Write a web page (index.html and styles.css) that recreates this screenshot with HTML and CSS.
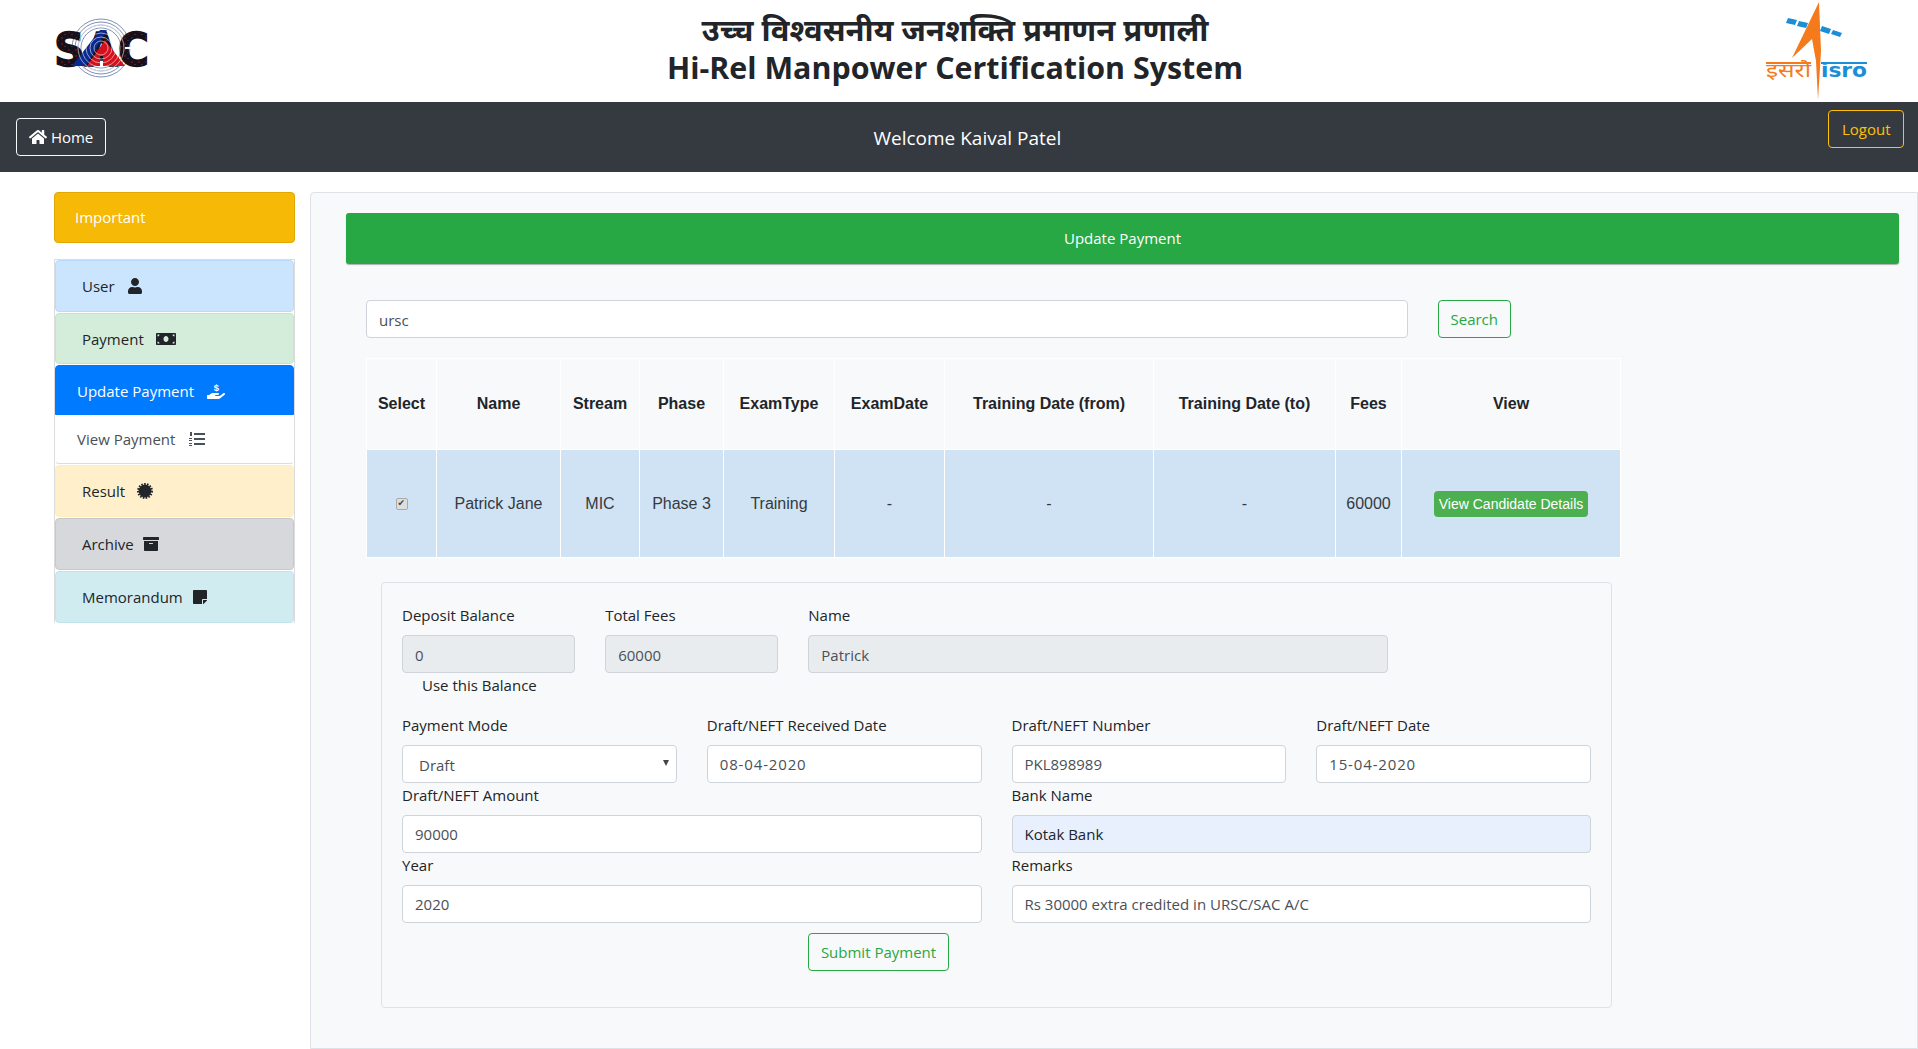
FILE: index.html
```html
<!DOCTYPE html>
<html>
<head>
    <title>Update Payment</title>
    <link rel="stylesheet" href="styles.css">
</head>
<body>
    <header class="top-header">
        <svg class="logo-sac" viewBox="0 0 100 62" aria-label="SAC logo">
            <defs>
                <pattern id="speckle" width="7" height="6" patternUnits="userSpaceOnUse">
                    <rect width="7" height="6" fill="#17101a"/>
                    <circle cx="2" cy="2" r="0.8" fill="#b3121d"/>
                    <circle cx="5" cy="4.5" r="0.5" fill="#5a6a70"/>
                </pattern>
            </defs>
            <g fill="none" stroke="#7f8fb5" stroke-width="1">
                <circle cx="48" cy="30" r="29"/>
                <circle cx="48" cy="30" r="26"/>
                <circle cx="48" cy="30" r="23"/>
                <circle cx="48" cy="30" r="20"/>
            </g>
            <text class="logo-sac-text" x="1" y="48" textLength="95" lengthAdjust="spacingAndGlyphs">SAC</text>
            <path d="M19 48 L47 12 L54 12 L33 48 Z" fill="#0b2a8f"/>
            <path d="M34 48 L52 22 L72 48 L50 48 L50 38 L47 38 L47 48 Z" fill="#d3101c"/>
            <g fill="none" stroke="#fff" stroke-width="0.8" opacity="0.7">
                <circle cx="48" cy="30" r="23"/>
                <circle cx="48" cy="30" r="19"/>
                <circle cx="48" cy="30" r="15"/>
                <circle cx="48" cy="30" r="11"/>
                <circle cx="48" cy="30" r="7"/>
            </g>
            <rect x="72" y="29" width="26" height="2" fill="#fff"/>
        </svg>
        <div class="site-title">
            <div class="title-hi">उच्च विश्वसनीय जनशक्ति प्रमाणन प्रणाली</div>
            <div class="title-en">Hi-Rel Manpower Certification System</div>
        </div>
        <svg class="logo-isro" viewBox="0 0 104 100" aria-label="ISRO logo">
            <path d="M53 1 L26 57 L46 38 L50 60 L52 99 L55 50 Z" fill="#f47a1c"/>
            <g fill="#1b8ed6">
                <path d="M22 17 L31 19 L29 24 L20 22 Z"/>
                <path d="M33 20 L42 22 L40 27 L31 25 Z"/>
                <path d="M56 25 L65 28 L63 33 L54 30 Z"/>
                <path d="M67 29 L76 32 L74 36 L65 33 Z"/>
            </g>
            <text class="logo-isro-hi" x="0" y="76" textLength="45" lengthAdjust="spacingAndGlyphs">इसरो</text>
            <rect x="0" y="61" width="45" height="2" fill="#f47a1c"/>
            <text class="logo-isro-en" x="55" y="76" textLength="46" lengthAdjust="spacingAndGlyphs">isro</text>
            <rect x="55" y="61" width="46" height="2" fill="#1b8ed6"/>
        </svg>
    </header>

    <nav class="top-nav">
        <a class="btn btn-home" href="#">
            <svg class="icon icon-home" viewBox="0 0 576 512"><path d="M280.37 148.26L96 300.11V464a16 16 0 0 0 16 16l112.06-.29a16 16 0 0 0 15.92-16V368a16 16 0 0 1 16-16h64a16 16 0 0 1 16 16v95.64a16 16 0 0 0 16 16.05L464 480a16 16 0 0 0 16-16V300L295.67 148.26a12.19 12.19 0 0 0-15.3 0zM571.6 251.47L488 182.56V44.05a12 12 0 0 0-12-12h-56a12 12 0 0 0-12 12v72.61L318.47 43a48 48 0 0 0-61 0L4.34 251.47a12 12 0 0 0-1.6 16.9l25.5 31A12 12 0 0 0 45.15 301l235.22-193.74a12.19 12.19 0 0 1 15.3 0L530.9 301a12 12 0 0 0 16.9-1.6l25.5-31a12 12 0 0 0-1.7-16.93z"/></svg>
            Home
        </a>
        <span class="welcome">Welcome Kaival Patel</span>
        <a class="btn btn-logout" href="#">Logout</a>
    </nav>

    <div class="page-body">
        <aside class="sidebar">
            <div class="important">Important</div>
            <div class="side-list">
                <a class="side-item item-user" href="#">User
                    <svg class="icon" viewBox="0 0 448 512"><path d="M224 256c70.7 0 128-57.3 128-128S294.7 0 224 0 96 57.3 96 128s57.3 128 128 128zm89.6 32h-16.7c-22.2 10.2-46.9 16-72.9 16s-50.6-5.8-72.9-16h-16.7C60.2 288 0 348.2 0 422.4V464c0 26.5 21.5 48 48 48h352c26.5 0 48-21.5 48-48v-41.6c0-74.2-60.2-134.4-134.4-134.4z"/></svg>
                </a>
                <a class="side-item item-payment" href="#">Payment
                    <svg class="icon icon-wide" viewBox="0 0 640 512"><path d="M608 64H32C14.33 64 0 78.33 0 96v320c0 17.67 14.33 32 32 32h576c17.67 0 32-14.33 32-32V96c0-17.67-14.33-32-32-32zM48 400v-64c35.35 0 64 28.65 64 64H48zm0-224v-64h64c0 35.35-28.65 64-64 64zm272 176c-44.19 0-80-42.99-80-96 0-53.02 35.82-96 80-96s80 42.98 80 96c0 53.03-35.83 96-80 96zm272 48h-64c0-35.35 28.65-64 64-64v64zm0-224c-35.35 0-64-28.65-64-64h64v64z"/></svg>
                </a>
                <a class="side-item sub-item item-active" href="#">Update Payment
                    <svg class="icon icon-wide" viewBox="0 0 576 512"><path d="M565.3 328.1c-11.8-10.7-30.2-10-42.6 0L430.3 402c-11.3 9.1-25.4 14-40 14H272c-8.8 0-16-7.2-16-16s7.2-16 16-16h78.3c15.9 0 30.7-10.9 33.3-26.6 3.3-20-12.1-37.4-31.6-37.4H192c-27 0-53.1 9.3-74.1 26.3L71.4 384H16c-8.8 0-16 7.2-16 16v96c0 8.8 7.2 16 16 16h356.8c14.5 0 28.6-4.9 40-14L564 377c15.2-12.1 16.4-35.3 1.3-48.9z"/><text class="icon-dollar" x="215" y="250">$</text></svg>
                </a>
                <a class="side-item sub-item item-view" href="#">View Payment
                    <svg class="icon" viewBox="0 0 16 16">
                        <rect x="5" y="2" width="11" height="2"/>
                        <rect x="5" y="7" width="11" height="2"/>
                        <rect x="5" y="12" width="11" height="2"/>
                        <rect x="1" y="1" width="2" height="4"/>
                        <rect x="0" y="7" width="3" height="1"/>
                        <rect x="0" y="9" width="3" height="1"/>
                        <rect x="0" y="12" width="3" height="1"/>
                        <rect x="0" y="14" width="3" height="1"/>
                    </svg>
                </a>
                <a class="side-item item-result" href="#">Result
                    <svg class="icon" viewBox="0 0 16 16">
                        <circle cx="8" cy="8" r="6.4"/>
                        <circle class="icon-teeth" cx="8" cy="8" r="7"/>
                    </svg>
                </a>
                <a class="side-item item-archive" href="#">Archive
                    <svg class="icon" viewBox="0 0 512 512"><path d="M32 448c0 17.7 14.3 32 32 32h384c17.7 0 32-14.3 32-32V160H32v288zm160-212c0-6.6 5.4-12 12-12h104c6.6 0 12 5.4 12 12v8c0 6.6-5.4 12-12 12H204c-6.6 0-12-5.4-12-12v-8zM480 32H32C14.3 32 0 46.3 0 64v48c0 8.8 7.2 16 16 16h480c8.8 0 16-7.2 16-16V64c0-17.7-14.3-32-32-32z"/></svg>
                </a>
                <a class="side-item item-memo" href="#">Memorandum
                    <svg class="icon" viewBox="0 0 448 512"><path d="M312 320h136V56c0-13.3-10.7-24-24-24H24C10.7 32 0 42.7 0 56v400c0 13.3 10.7 24 24 24h264V344c0-13.2 10.8-24 24-24zm129 55l-98 98c-4.5 4.5-10.6 7-17 7h-6V352h128v6.1c0 6.3-2.5 12.4-7 16.9z"/></svg>
                </a>
            </div>
        </aside>

        <main class="main-panel">
            <div class="page-banner">Update Payment</div>

            <div class="search-row">
                <input class="form-control" type="text" value="ursc">
                <button class="btn btn-outline-green" type="button">Search</button>
            </div>

            <table class="result-table">
                <thead>
                    <tr>
                        <th class="col-select">Select</th>
                        <th class="col-name">Name</th>
                        <th class="col-stream">Stream</th>
                        <th class="col-phase">Phase</th>
                        <th class="col-type">ExamType</th>
                        <th class="col-date">ExamDate</th>
                        <th class="col-from">Training Date (from)</th>
                        <th class="col-to">Training Date (to)</th>
                        <th class="col-fees">Fees</th>
                        <th>View</th>
                    </tr>
                </thead>
                <tbody>
                    <tr>
                        <td><input class="row-check" type="checkbox" checked></td>
                        <td>Patrick Jane</td>
                        <td>MIC</td>
                        <td>Phase 3</td>
                        <td>Training</td>
                        <td>-</td>
                        <td>-</td>
                        <td>-</td>
                        <td>60000</td>
                        <td><a class="btn-details" href="#">View Candidate Details</a></td>
                    </tr>
                </tbody>
            </table>

            <form class="payment-form">
                <div class="form-grid">
                    <div class="field span-2">
                        <label>Deposit Balance</label>
                        <input class="form-control" type="text" value="0" readonly>
                        <span class="balance-note">Use this Balance</span>
                    </div>
                    <div class="field span-2">
                        <label>Total Fees</label>
                        <input class="form-control" type="text" value="60000" readonly>
                    </div>
                    <div class="field span-6">
                        <label>Name</label>
                        <input class="form-control" type="text" value="Patrick" readonly>
                    </div>
                </div>
                <div class="form-grid row-gap">
                    <div class="field span-3">
                        <label>Payment Mode</label>
                        <div class="select-wrap">
                            <select class="form-control">
                                <option>Draft</option>
                                <option>NEFT</option>
                            </select>
                        </div>
                    </div>
                    <div class="field span-3">
                        <label>Draft/NEFT Received Date</label>
                        <input class="form-control date-value" type="text" value="08-04-2020">
                    </div>
                    <div class="field span-3">
                        <label>Draft/NEFT Number</label>
                        <input class="form-control" type="text" value="PKL898989">
                    </div>
                    <div class="field span-3">
                        <label>Draft/NEFT Date</label>
                        <input class="form-control date-value" type="text" value="15-04-2020">
                    </div>
                    <div class="field span-6">
                        <label>Draft/NEFT Amount</label>
                        <input class="form-control" type="text" value="90000">
                    </div>
                    <div class="field span-6">
                        <label>Bank Name</label>
                        <input class="form-control autofilled" type="text" value="Kotak Bank">
                    </div>
                    <div class="field span-6">
                        <label>Year</label>
                        <input class="form-control" type="text" value="2020">
                    </div>
                    <div class="field span-6">
                        <label>Remarks</label>
                        <input class="form-control" type="text" value="Rs 30000 extra credited in URSC/SAC A/C">
                    </div>
                </div>
                <div class="submit-row">
                    <button class="btn btn-outline-green" type="button">Submit Payment</button>
                </div>
            </form>
        </main>
    </div>
</body>
</html>
```

FILE: styles.css
```css
* {
    box-sizing: border-box;
}

html, body {
    height: 100%;
}

body {
    font-family: "Open Sans", "Noto Sans", sans-serif;
    font-size: 15px;
    color: #212529;
    background-color: #fff;
    margin: 0;
    overflow: hidden;
}

a {
    text-decoration: none;
    color: inherit;
}

.icon {
    width: 16px;
    height: 16px;
    fill: currentColor;
    vertical-align: -2px;
}

.icon-wide {
    width: 20px;
}

.icon-home {
    width: 18px;
}

/* header */
.top-header {
    height: 102px;
    display: flex;
    justify-content: space-between;
    align-items: flex-start;
    padding: 0 48px 0 53px;
}

.logo-sac {
    width: 100px;
    height: 62px;
    margin-top: 18px;
    overflow: visible;
}

.logo-sac-text {
    font-family: "DejaVu Sans", sans-serif;
    font-weight: bold;
    font-size: 46px;
    fill: url(#speckle);
    stroke: #17101a;
    stroke-width: 1.5;
}

.logo-isro {
    width: 104px;
    height: 100px;
    margin-top: 1px;
}

.logo-isro-hi {
    font-family: "Noto Sans", "FreeSans", sans-serif;
    font-size: 19px;
    fill: #f47a1c;
}

.logo-isro-en {
    font-family: "DejaVu Sans", sans-serif;
    font-size: 19px;
    font-weight: bold;
    fill: #1b8ed6;
}

.site-title {
    text-align: center;
    font-weight: 700;
    margin-top: 10px;
    margin-right: 9px;
}

.title-hi {
    font-size: 31px;
    line-height: 38px;
}

.title-en {
    font-size: 30.4px;
    line-height: 39px;
}

/* nav */
.top-nav {
    height: 70px;
    background-color: #343a40;
    display: flex;
    justify-content: space-between;
    align-items: center;
    padding: 0 14px 0 16px;
}

.welcome {
    color: #fff;
    font-size: 19px;
    padding-top: 1px;
}

.btn {
    display: inline-block;
    height: 38px;
    line-height: 36px;
    padding: 0 12px;
    border: 1px solid;
    border-radius: 4px;
    background: transparent;
    font-family: inherit;
    font-size: 15px;
    cursor: pointer;
}

.btn-home {
    color: #fff;
    border-color: #f8f9fa;
}

.btn-logout {
    color: #ffc107;
    border-color: #ffc107;
    align-self: flex-start;
    margin-top: 8px;
    padding: 0 12.5px;
}

.btn-outline-green {
    color: #28a745;
    border-color: #28a745;
}

/* sidebar */
.page-body {
    display: flex;
    height: calc(100% - 172px);
    padding: 20px 0 0 54px;
    gap: 15px;
}

.sidebar {
    width: 241px;
    flex-shrink: 0;
}

.important {
    height: 51px;
    line-height: 49px;
    padding-left: 20px;
    color: #fff;
    background-color: #f5b906;
    border: 1px solid #e0a800;
    border-radius: 4px;
}

.side-list {
    margin-top: 16px;
    border: 1px solid #dcdcdc;
    border-width: 1px 1px 0;
}

.side-item {
    display: block;
    height: 52px;
    line-height: 50px;
    padding-left: 26px;
    border: 1px solid transparent;
    border-radius: 4px;
    margin-bottom: 1px;
}

.side-item .icon {
    margin-left: 8px;
}

.sub-item {
    padding-left: 21px;
    margin-bottom: 0;
    border-radius: 0;
}

.item-user {
    background-color: #cce5ff;
    border-color: #b8daff;
}

.item-payment {
    height: 51px;
    background-color: #d4edda;
    border-color: #c3e6cb;
}

.item-active {
    height: 50px;
    color: #fff;
    background-color: #007bff;
    border-color: #007bff;
    border-radius: 4px 4px 0 0;
}

.item-view {
    height: 49px;
    line-height: 46px;
    color: #495057;
    background-color: #fff;
    border-bottom-color: #dcdcdc;
    border-radius: 0 0 4px 4px;
    margin-bottom: 1px;
}

.item-view .icon {
    margin-left: 10px;
}

.item-result {
    background-color: #fff0cb;
    border-color: #ffeeba;
}

.item-archive {
    background-color: #d6d8db;
    border-color: #c6c8ca;
}

.item-archive .icon, .item-memo .icon {
    margin-left: 5px;
}

.item-memo {
    background-color: #d1ecf1;
    border-color: #bee5eb;
    margin-bottom: 0;
}

.icon-teeth {
    fill: none;
    stroke: currentColor;
    stroke-width: 2;
    stroke-dasharray: 1.6 1.3;
}

.icon-dollar {
    font-family: "Liberation Sans", sans-serif;
    font-size: 300px;
    font-weight: bold;
    fill: currentColor;
}

/* main panel */
.main-panel {
    flex: 1;
    min-width: 0;
    background-color: #f8f9fa;
    border: 1px solid #dee2e6;
    border-radius: 4px 0 0 0;
    padding: 20px 18px 0 35px;
}

.page-banner {
    height: 51px;
    line-height: 51px;
    text-align: center;
    color: #fff;
    background-color: #28a745;
    border-radius: 3px;
    box-shadow: 0 1px 1px rgba(0, 0, 0, 0.3);
}

.search-row {
    display: flex;
    gap: 30px;
    margin: 36px 0 0 20px;
    width: 1145px;
}

.search-row .form-control {
    flex: 1;
    padding-top: 2px;
}

.form-control {
    display: block;
    width: 100%;
    height: 38px;
    padding: 0 12px;
    font-family: inherit;
    font-size: 15px;
    color: #495057;
    background-color: #fff;
    border: 1px solid #ced4da;
    border-radius: 4px;
}

.form-control[readonly] {
    background-color: #e9ecef;
    padding-top: 1px;
}

select.form-control {
    appearance: none;
    padding: 2px 12px 0 16px;
}

.select-wrap {
    position: relative;
}

.select-wrap::after {
    content: "";
    position: absolute;
    right: 8px;
    top: 15px;
    border-left: 3px solid transparent;
    border-right: 3px solid transparent;
    border-top: 6px solid #444;
}

.date-value {
    letter-spacing: 0.85px;
}

.autofilled {
    background-color: #e8f0fe;
    color: #212529;
}

/* table */
.result-table {
    width: 1255px;
    margin: 20px 0 0 20px;
    border-collapse: collapse;
    table-layout: fixed;
    font-family: "Liberation Sans", Arial, sans-serif;
    font-size: 16px;
    text-align: center;
}

.result-table th, .result-table td {
    border: 1px solid #fff;
    padding: 0;
}

.result-table th {
    height: 91px;
    font-size: 16px;
}

.result-table td {
    height: 108px;
    color: #343a40;
    background-color: #d0e3f4;
}

.col-select { width: 70px; }
.col-name { width: 124px; }
.col-stream { width: 79px; }
.col-phase { width: 84px; }
.col-type { width: 111px; }
.col-date { width: 110px; }
.col-from { width: 209px; }
.col-to { width: 182px; }
.col-fees { width: 66px; }

.row-check {
    appearance: none;
    display: inline-block;
    width: 12px;
    height: 12px;
    margin: 0;
    vertical-align: middle;
    background-color: #dedede;
    border: 1px solid #ababab;
    border-radius: 2px;
    position: relative;
}

.row-check::before {
    content: "\2714";
    position: absolute;
    left: 1px;
    top: -1px;
    font-family: "DejaVu Sans", sans-serif;
    font-size: 9px;
    line-height: 11px;
    color: #444;
}

.btn-details {
    display: inline-block;
    padding: 0 5px;
    height: 26px;
    line-height: 26px;
    font-size: 14px;
    color: #fff;
    background-color: #4caf50;
    border-radius: 4px;
}

/* form */
.payment-form {
    width: 1231px;
    height: 426px;
    margin: 24px 0 0 35px;
    padding: 20px 20px 0;
    border: 1px solid #dee2e6;
    border-radius: 4px;
}

.form-grid {
    display: grid;
    grid-template-columns: repeat(12, 1fr);
    column-gap: 30px;
}

.row-gap {
    margin-top: 16px;
}

.field label {
    display: block;
    height: 24px;
    line-height: 24px;
    margin-bottom: 8px;
}

.span-2 { grid-column: span 2; }
.span-3 { grid-column: span 3; }
.span-6 { grid-column: span 6; }

.balance-note {
    display: block;
    height: 24px;
    line-height: 24px;
    padding-left: 20px;
}

.submit-row {
    text-align: center;
    margin-top: 10px;
    width: 953px;
}
```
